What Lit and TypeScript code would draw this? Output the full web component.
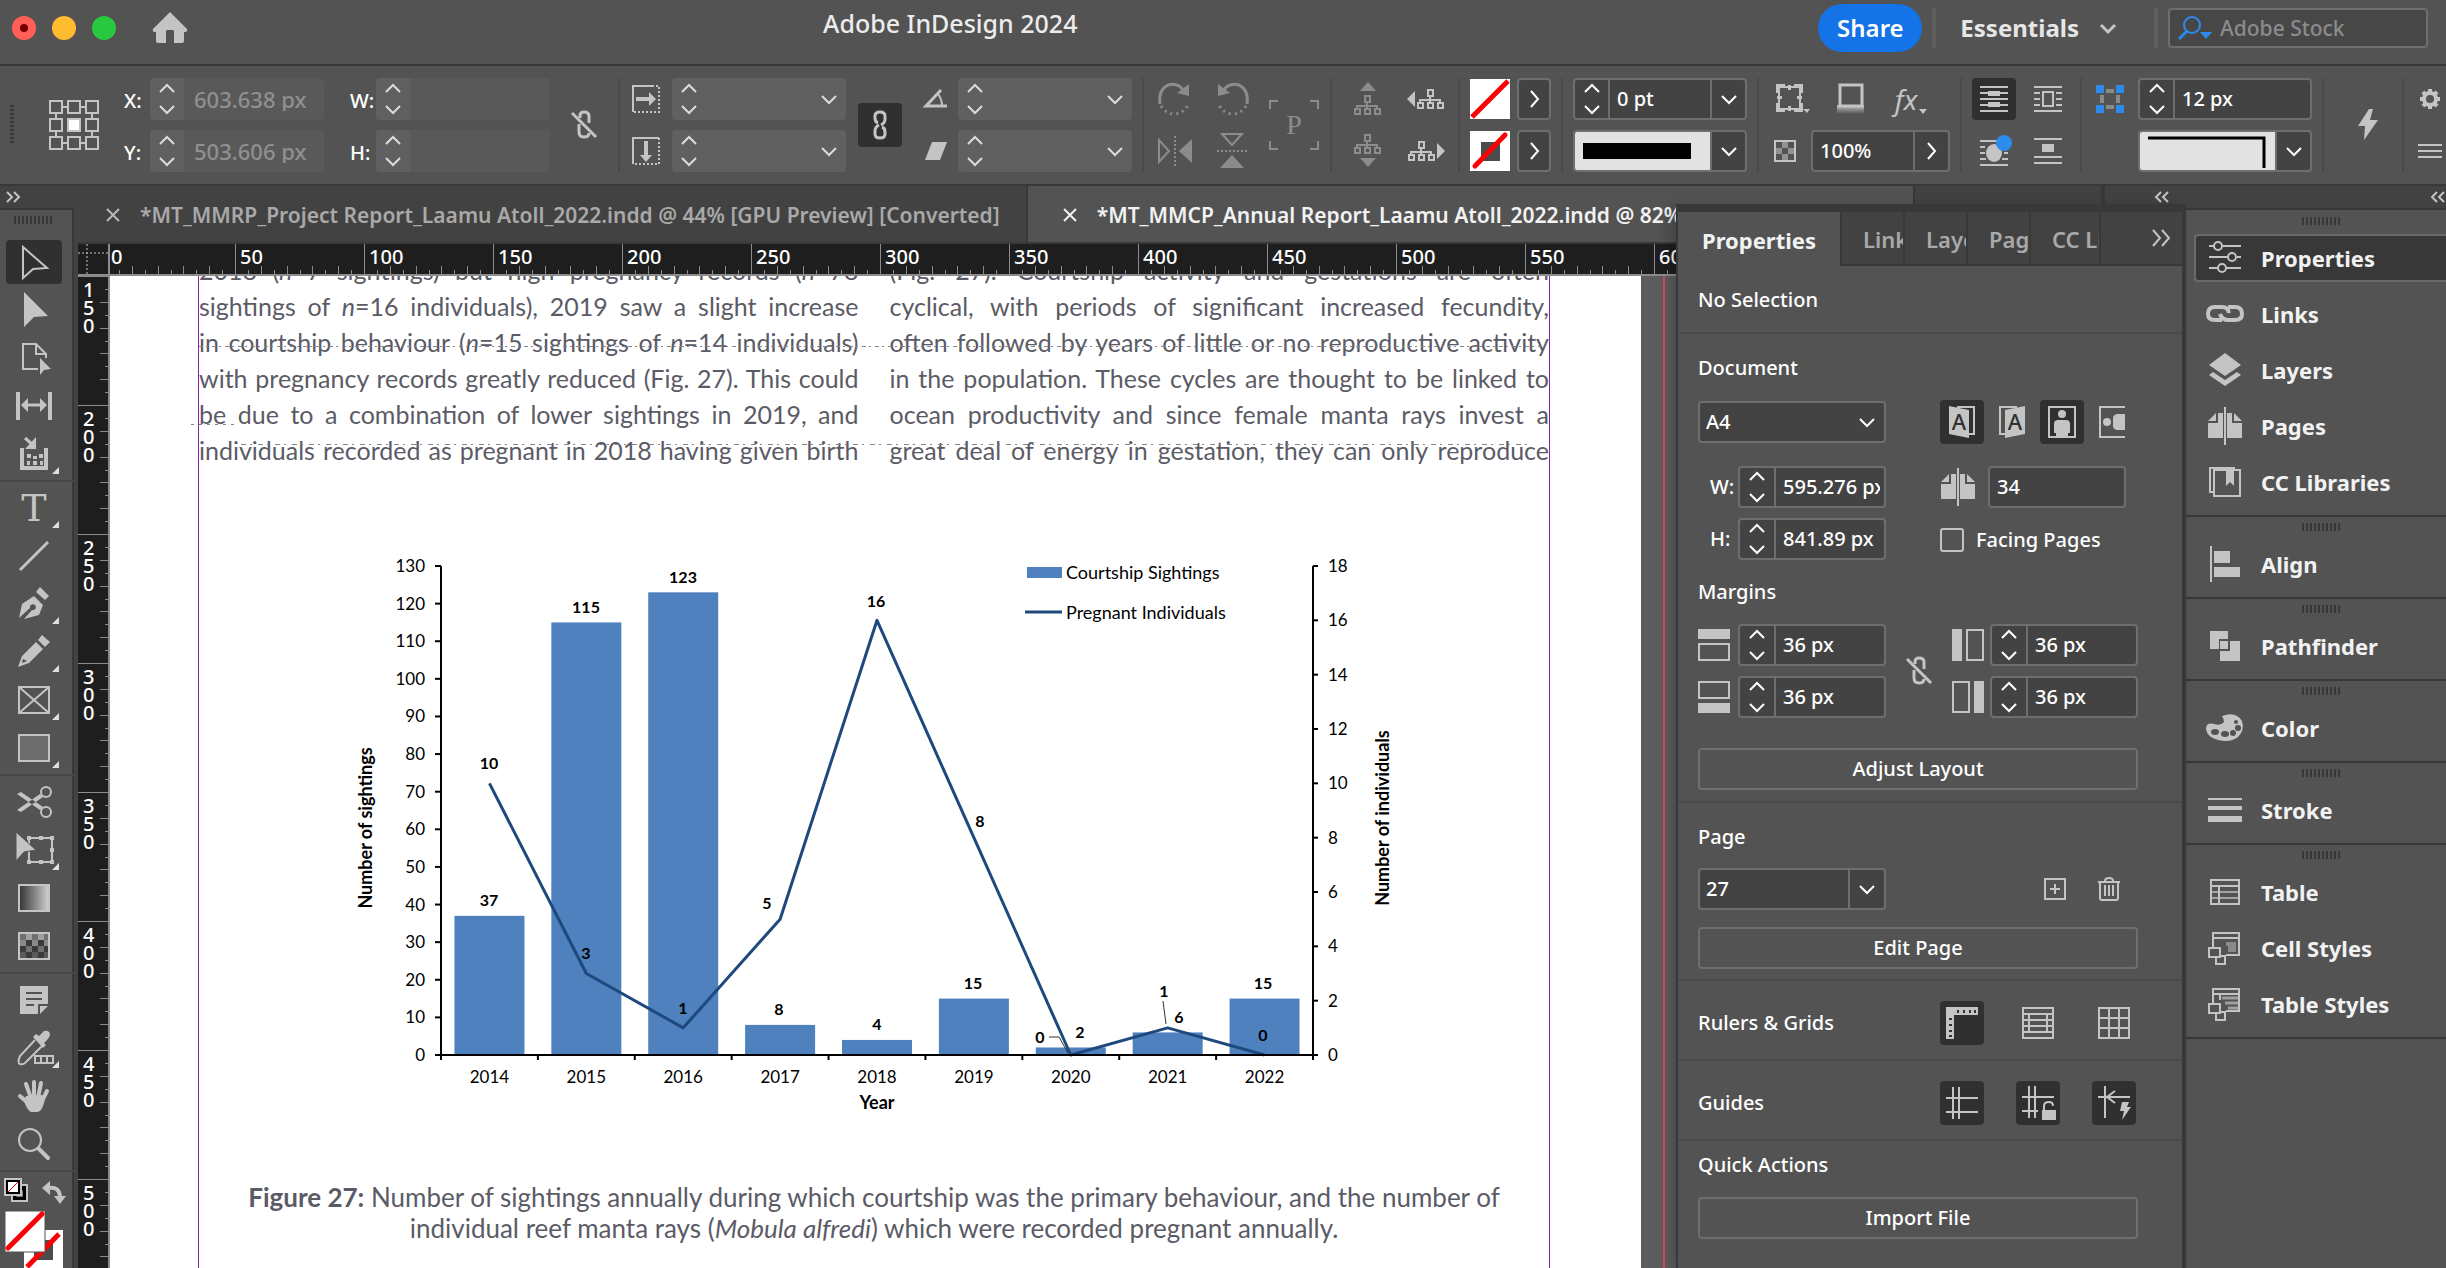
import { LitElement, html, svg, css, nothing } from "lit";
import { customElement } from "lit/decorators.js";
import { classMap } from "lit/directives/class-map.js";

/* ---------- icon helpers ---------- */

const ic = (w: number, h: number, body: unknown) =>
  html`<svg class="ic" width=${w} height=${h} viewBox="0 0 ${w} ${h}" aria-hidden="true">${body}</svg>`;

const up = () => ic(16, 9, svg`<path class="s" d="M1 8L8 1L15 8"/>`);
const down = () => ic(16, 9, svg`<path class="s" d="M1 1L8 8L15 1"/>`);
const right = () => ic(9, 18, svg`<path class="s" d="M1 1L8 9L1 17"/>`);
const dblRight = () => ic(18, 18, svg`<path class="s" d="M1 1L8 9L1 17M10 1L17 9L10 17"/>`);
const dblRightSmall = () => ic(14, 10, svg`<path class="s" d="M1 0L6 5L1 10M8 0L13 5L8 10"/>`);
const dblLeftSmall = () => ic(14, 10, svg`<path class="s" d="M6 0L1 5L6 10M13 0L8 5L13 10"/>`);

const home = () => ic(36, 32, svg`<path class="f" d="M18 0L35 17Q36 20 33 20H32V29Q32 31 30 31H22V19Q22 18 20 18H16Q14 18 14 19V31H6Q4 31 4 29V20H3Q0 20 1 17Z"/>`);

const unlink = () => ic(26, 30, svg`
  <path class="s3" d="M9 8V6Q9 2 13 2Q18 2 18 6V13M8 14V22Q8 27 13 27Q18 27 18 23"/>
  <path class="s3" d="M1 3L25 27"/>`);
const link = () => ic(14, 30, svg`
  <path class="s3" d="M5 13Q2 12 2 8V6Q2 2 7 2Q12 2 12 6V9Q12 13 8 15"/>
  <path class="s3" d="M9 17Q12 18 12 22V24Q12 28 7 28Q2 28 2 24V21Q2 17 6 15"/>`);

const refPoint = () => ic(50, 50, svg`
  ${[0, 18, 36].map((y) => [0, 18, 36].map((x) => svg`<rect class="s" x=${x + 1} y=${y + 1} width="12" height="12"/>`))}
  <path class="s" d="M14 7H18M32 7H36M14 43H18M32 43H36M7 14V18M7 32V36M43 14V18M43 32V36"/>
  <rect fill="#535353" x="16" y="16" width="18" height="18"/>
  <rect fill="#fff" stroke="#c4c4c4" stroke-width="2" x="19" y="19" width="12" height="12"/>`);

const scaleX = () => ic(28, 28, svg`
  <path class="s" d="M20 1H1V27"/><path class="s" stroke-dasharray="2 2" d="M20 1H27V27H1"/>
  <path class="f" d="M4 12H17V7L24 14L17 21V16H4Z"/>`);
const scaleY = () => ic(28, 28, svg`
  <path class="s" d="M1 27V1H27"/><path class="s" stroke-dasharray="2 2" d="M27 1V27H1"/>
  <path class="f" d="M12 4H16V18H20L14 25L8 18H12Z"/>`);
const angle = () => ic(24, 18, svg`<path class="s3" d="M17 0L2 16H23"/><path class="s" d="M14 4Q18 9 18 16"/>`);
const shear = () => ic(24, 18, svg`<path class="f" d="M8 0H23L16 18H1Z"/>`);

const rotateCw = () => ic(34, 34, svg`
  <path class="s3" d="M2 22Q0 8 10 3Q20 0 26 9"/><path class="f" d="M31 2V14L19 11Z"/>
  <path class="s3" stroke-dasharray="2 4" d="M3 24Q8 32 17 32Q26 31 30 23"/>`);
const rotateCcw = () => ic(34, 34, svg`
  <path class="s3" d="M32 22Q34 8 24 3Q14 0 8 9"/><path class="f" d="M3 2V14L15 11Z"/>
  <path class="s3" stroke-dasharray="2 4" d="M31 24Q26 32 17 32Q8 31 4 23"/>`);
const flipH = () => ic(34, 34, svg`
  <path class="s" d="M1 6V28L11 17Z"/><path class="s" stroke-dasharray="2 2" d="M17 2V34"/><path class="f" d="M34 5V29L21 17Z"/>`);
const flipV = () => ic(34, 36, svg`
  <path class="s" d="M7 1H27L17 12Z"/><path class="s" stroke-dasharray="2 2" d="M2 18H32"/><path class="f" d="M5 35H29L17 22Z"/>`);
const corners = () => html`<span class="pmark">${ic(50, 50, svg`<path class="s" d="M1 9V1H9M41 1H49V9M49 41V49H41M9 49H1V41"/>`)}<span>P</span></span>`;

const treeBody = (x: number, y: number) => svg`<g transform="translate(${x} ${y})">
  <rect class="s" x="11" y="1" width="5" height="6"/><path class="s" d="M13 8V14M3 14V11H23V14"/>
  <rect class="s" x="1" y="14" width="5" height="5"/><rect class="s" x="11" y="14" width="5" height="5"/><rect class="s" x="21" y="14" width="5" height="5"/></g>`;
const treeUp = () => ic(28, 34, svg`<path class="f" d="M6 9L14 0L22 9Z"/>${treeBody(0, 13)}`);
const treeDown = () => ic(28, 34, svg`${treeBody(0, 0)}<path class="f" d="M6 24L14 33L22 24Z"/>`);
const treeLeft = () => ic(38, 22, svg`<path class="f" d="M8 3V19L0 11Z"/>${treeBody(10, 1)}`);
const treeRight = () => ic(38, 22, svg`${treeBody(1, 1)}<path class="f" d="M30 3V19L38 11Z"/>`);

const noneFill = () => ic(40, 42, svg`<rect fill="#fff" y="1" width="40" height="40"/><path stroke="#fb0007" stroke-width="5" d="M2 39L38 3"/>`);
const noneStroke = () => ic(40, 42, svg`<rect fill="#fff" y="1" width="40" height="40"/><rect fill="#4b4b4b" x="11" y="12" width="19" height="19"/>
  <path stroke="#fb0007" stroke-width="5" stroke-linecap="round" d="M5 36L35 5"/>`);

const cornerOpts = () => ic(34, 30, svg`
  <rect class="s" x="3" y="3" width="21" height="22"/>
  <path class="s4" d="M2 9V2H9M18 2H25V9M2 19V26H9M18 26H25V19"/>
  <path class="f" d="M12 1H15V6H12ZM12 22H15V27H12ZM1 12H6V15H1ZM21 12H26V15H21Z"/>
  <path fill="#535353" d="M4 4H9V9H4ZM18 4H23V9H18ZM4 19H9V24H4ZM18 19H23V24H18Z"/>
  <path class="f" d="M27 25H34L31 29Z"/>`);
const shadowBox = () => ic(28, 34, svg`
  <defs><linearGradient id="sh" x2="0" y2="1"><stop offset="0" stop-color="#c4c4c4"/><stop offset="1" stop-color="#535353"/></linearGradient></defs>
  <rect fill="url(#sh)" x="0" y="23" width="27" height="9"/><rect fill="#535353" class="frame3" x="3" y="3" width="22" height="21"/>`);
const caret = () => ic(8, 5, svg`<path class="f" d="M0 0H8L4 5Z"/>`);
const checker = () => ic(24, 24, svg`<rect class="s" x="2" y="2" width="20" height="20"/>
  <path class="f" opacity=".55" d="M9 3H15V9H9ZM3 9H9V15H3ZM15 9H21V15H15ZM9 15H15V21H9Z"/>`);

const wrapNone = () => ic(28, 28, svg`<path class="s" d="M0 2H28M0 8H8M20 8H28M0 14H28M0 20H8M20 20H28M0 26H28"/>
  <path class="f" d="M8 6H20V11H8ZM8 17H20V22H8Z"/>`);
const wrapBox = () => ic(28, 28, svg`<path class="s" d="M0 2H28M0 8H6M22 8H28M0 14H6M22 14H28M0 20H6M22 20H28M0 26H28"/><rect class="s" x="9" y="7" width="10" height="14"/>`);
const wrapShape = () => ic(32, 32, svg`<path class="s" d="M2 6H20M2 12H7M2 18H7M26 18H30M2 24H8M24 24H30M2 30H30"/>
  <ellipse class="f" cx="16" cy="18" rx="8" ry="9"/><circle fill="#2d8ceb" cx="26" cy="8" r="8"/>`);
const wrapJump = () => ic(28, 28, svg`<path class="s" d="M0 2H28M0 20H28M0 26H28"/><rect class="f" x="8" y="7" width="12" height="8"/>`);
const autoFit = () => ic(28, 28, svg`<path fill="#2d8ceb" d="M0 0H8V8H0ZM20 0H28V8H20ZM0 20H8V28H0ZM20 20H28V28H20Z"/>
  <path fill="#8a8a8a" d="M10 4H18V8H10ZM10 20H18V24H10ZM4 10H8V18H4ZM20 10H24V18H20Z"/>`);
const bolt = () => ic(20, 32, svg`<path class="f" d="M11 0L0 17H7L6 31L20 11H12L15 0Z"/>`);
const gear = () => ic(22, 22, svg`<circle cx="11" cy="11" r="6" fill="none" stroke="#c4c4c4" stroke-width="4"/>
  ${[0, 45, 90, 135, 180, 225, 270, 315].map((a) => svg`<rect class="f" x="9" y="1" width="4" height="4" transform="rotate(${a} 11 11)"/>`)}`);
const menu = () => ic(24, 16, svg`<path class="s" d="M0 2H24M0 8H24M0 14H24"/>`);
const close = () => ic(14, 14, svg`<path class="s" d="M1 1L13 13M13 1L1 13"/>`);
const searchIc = () => ic(34, 26, svg`<circle cx="14" cy="10" r="8" fill="none" stroke="#2d8ceb" stroke-width="2"/>
  <path stroke="#2d8ceb" stroke-width="3" d="M9 16L1 24"/><path fill="#2d8ceb" d="M22 17H34L28 24Z"/>`);

/* ---------- toolbox icons, each on a 44 x 40 field ---------- */

const T = (body: unknown, more = false) =>
  ic(44, 40, svg`${body}${more ? svg`<path fill="#e0e0e0" d="M43 33V40H36Z"/>` : nothing}`);

const toolGroups: [string, unknown][][] = [
  [
    ["Selection", T(svg`<path class="s" stroke-linejoin="miter" d="M7 5V36L17 27L31 26Z"/>`)],
    ["Direct selection", T(svg`<path class="f" d="M8 2V37L18 27L32 26Z"/>`)],
    ["Page", T(svg`<path class="s" d="M22 31H7V6H20L30 16V20M20 6V16H30"/><path class="f" d="M24 20V37L28 32L35 31Z"/>`)],
    ["Gap", T(svg`<path class="s4" d="M2 6V34M34 6V34"/><path class="s3" d="M10 19H26"/><path class="f" d="M5 19L12 12V26ZM31 19L24 12V26Z"/>`)],
    ["Content collector", T(svg`<path class="s4" d="M6 14V34H30V14"/><path class="s3" d="M9 4L17 11"/><path class="f" d="M20 3V15H9Z"/>
      <path class="f" d="M11 20H15V24H11ZM23 20H27V24H23ZM11 27H14V31H11ZM17 27H21V31H17ZM24 27H27V31H24ZM17 22H21V25H17Z"/>`, true)],
  ],
  [
    ["Type", T(svg`<text class="tee" x="18" y="33">T</text>`, true)],
    ["Line", T(svg`<path class="s3" d="M4 34L32 6"/>`)],
    ["Pen", T(svg`<path class="f" d="M18 12L27 21L23 31L8 35L16 26A3 3 0 1 0 14 24L3 34L6 20Z"/><path class="f" d="M24 3L33 12L29 16L20 8Z"/>`, true)],
    ["Pencil", T(svg`<path class="f" d="M20 10L27 17L13 31L2 35L6 24ZM7 27L6 31L11 29Z" fill-rule="evenodd"/><path class="f" d="M26 3L34 10L29 15L22 8Z"/>`, true)],
    ["Rectangle frame", T(svg`<rect class="s" x="3" y="7" width="30" height="26"/><path class="s" d="M3 7L33 33M33 7L3 33"/>`, true)],
    ["Rectangle", T(svg`<rect fill="#6d6d6d" stroke="#c4c4c4" stroke-width="2" x="3" y="7" width="30" height="26"/>`, true)],
  ],
  [
    ["Scissors", T(svg`<circle class="s" cx="30" cy="10" r="5"/><circle class="s" cx="30" cy="30" r="5"/>
      <path class="f" d="M1 12L5 10L27 25L24 28ZM1 28L5 30L27 15L24 12Z"/>`)],
    ["Free transform", T(svg`<rect class="s" x="13" y="8" width="23" height="24"/>
      <path class="f" d="M11 6H15V10H11ZM34 6H38V10H34ZM11 30H15V34H11ZM34 30H38V34H34ZM23 6H27V10H23ZM23 30H27V34H23ZM34 18H38V22H34Z"/>
      <path fill="#c4c4c4" stroke="#535353" d="M0 2V31L8 22L20 20Z"/>`, true)],
    ["Gradient swatch", T(svg`<defs><linearGradient id="gr"><stop offset="0" stop-color="#333"/><stop offset="1" stop-color="#d0d0d0"/></linearGradient></defs>
      <rect fill="url(#gr)" stroke="#c4c4c4" stroke-width="2" x="3" y="7" width="30" height="26"/>`)],
    ["Gradient feather", T(svg`<rect fill="#3a3a3a" x="3" y="7" width="30" height="26"/>
      <path fill="#a0a0a0" d="M10 8H16V14H10ZM22 8H28V14H22Z"/><path fill="#8a8a8a" d="M4 14H10V20H4ZM16 14H22V20H16ZM28 14H32V20H28Z"/>
      <path fill="#707070" d="M10 20H16V26H10ZM22 20H28V26H22ZM4 8H10V14H4ZM16 8H22V14H16ZM28 8H32V14H28Z"/>
      <path fill="#5a5a5a" d="M4 26H10V32H4ZM16 26H22V32H16ZM28 26H32V32H28Z"/><rect class="s" x="3" y="7" width="30" height="26"/>`)],
  ],
  [
    ["Note", T(svg`<path class="f" d="M4 6H32V24H22V34H4ZM24 34V26H32Z"/><path stroke="#535353" stroke-width="2" d="M10 13H26M10 19H26M10 25H18"/>`)],
    ["Eyedropper", T(svg`<path class="s" d="M19 12L4 28Q1 35 4 36Q8 37 11 33L26 18"/>
      <path class="f" d="M17 9L20 6L23 8L28 3Q33 2 34 6Q34 9 31 12L28 15L30 17L27 20Z"/><rect fill="#535353" stroke="#c4c4c4" stroke-width="2" x="19" y="28" width="18" height="7"/>
      <path class="s" d="M25 28V35M31 28V35"/>`, true)],
    ["Hand", T(svg`<path fill="none" stroke="#c4c4c4" stroke-width="4" stroke-linecap="round" d="M4 20L12 27M10 8L15 22M18 6V22M25 7L22 22M31 15L25 27"/>
      <path class="f" d="M10 20L26 19L29 21Q27 36 21 36H15Q11 34 8 25Z"/>`)],
    ["Zoom", T(svg`<circle class="s" cx="14" cy="16" r="11"/><path stroke="#c4c4c4" stroke-width="4" stroke-linecap="round" d="M23 25L32 34"/>`)],
  ],
];

/* ---------- dock icons ---------- */

const pagesIc = () => ic(36, 38, svg`<path class="f" d="M1 14L9 6V14ZM11 6H16V31H1V16H11ZM35 14L27 6V14ZM25 6H20V31H35V16H25Z"/><path class="s" d="M18 0V38"/>`);
const dockGroups: [string, unknown][][] = [
  [
    ["Properties", ic(38, 32, svg`<path class="s" d="M3 4H8M17 4H35M3 15H22M31 15H35M3 26H11M20 26H35"/><circle class="s" cx="12" cy="4" r="4" /><circle class="s" cx="26" cy="15" r="4"/><circle class="s" cx="16" cy="26" r="4"/>`)],
    ["Links", ic(38, 20, svg`<path class="s4" d="M16 16H9Q2 16 2 10Q2 3 9 3H16Q22 3 23 9"/><path class="s4" d="M22 3H29Q36 3 36 10Q36 16 29 16H22Q16 16 14 10"/>`)],
    ["Layers", ic(38, 34, svg`<path class="f" d="M19 0L35 12L19 23L3 12Z"/><path class="f" d="M3 22L7 19L19 27L31 19L35 22L19 33Z"/>`)],
    ["Pages", ic(38, 38, svg`<path class="f" d="M2 14L10 6V14ZM12 6H17V31H2V16H12ZM36 14L28 6V14ZM26 6H21V31H36V16H26Z"/><path class="s" d="M19 0V38"/>`)],
    ["CC Libraries", ic(38, 32, svg`<path class="s" d="M8 26H4V2H29"/><rect class="s" x="8" y="4" width="26" height="26"/><path class="f" d="M20 4H28V20L24 16L20 20Z"/>`)],
  ],
  [["Align", ic(38, 36, svg`<path class="s" d="M5 0V36"/><path class="f" d="M8 5H24V17H8ZM8 21H34V31H8Z"/>`)]],
  [["Pathfinder", ic(38, 32, svg`<path class="f" d="M4 1H22V9H13V19H4ZM24 11H34V31H14V21H24ZM14 11H22V19H14Z"/>`)]],
  [["Color", ic(38, 30, svg`<path fill="#c4c4c4" d="M16 3Q30 -2 36 8Q39 17 32 24Q24 30 12 27Q1 24 0 16Q0 9 8 11Q15 13 18 9Q18 6 16 3Z"/>
    <g fill="#535353"><ellipse cx="9" cy="19" rx="4" ry="3"/><ellipse cx="19" cy="21" rx="4" ry="3"/><ellipse cx="27" cy="20" rx="3" ry="3"/><circle cx="32" cy="15" r="3"/><circle cx="30" cy="9" r="2"/></g>`)]],
  [["Stroke", ic(38, 26, svg`<path class="f" d="M2 1H36V3H2ZM2 9H36V13H2ZM2 19H36V25H2Z"/>`)]],
  [
    ["Table", ic(38, 28, svg`<rect class="s" x="5" y="2" width="28" height="24"/><path class="s" d="M5 8H33M13 8V26"/><path class="s" opacity=".7" d="M5 14H33M5 20H33"/>`)],
    ["Cell Styles", ic(38, 36, svg`<path class="s" d="M7 18V3H33V25H20M7 8H33"/><path fill="#8a8a8a" d="M20 12H30V22H22V16H20Z"/>
      <rect class="s" x="10" y="26" width="9" height="8"/><rect fill="#535353" stroke="#c4c4c4" stroke-width="2" x="3" y="18" width="11" height="9"/>`)],
    ["Table Styles", ic(38, 36, svg`<path class="s" d="M7 18V3H33V25H20M7 8H33M14 8V14"/><path stroke="#a0a0a0" stroke-width="3" d="M16 12H32M19 17H32M22 22H32"/>
      <rect class="s" x="10" y="26" width="9" height="8"/><rect fill="#535353" stroke="#c4c4c4" stroke-width="2" x="3" y="18" width="11" height="9"/>`)],
  ],
];

/* ---------- report figure ---------- */

const years = ["2014", "2015", "2016", "2017", "2018", "2019", "2020", "2021", "2022"];
const sightings = [37, 115, 123, 8, 4, 15, 2, 6, 15];
const pregnant = [10, 3, 1, 5, 16, 8, 0, 1, 0];
/* where each value label sits: [text, x, y of its middle] */
const barLabels: [string, number, number][] = [
  ["37", 290, 360], ["115", 387, 67], ["123", 484, 37], ["8", 580, 469], ["4", 678, 484],
  ["15", 774, 443], ["2", 881, 492], ["6", 980, 477], ["15", 1064, 443],
];
const lineLabels: [string, number, number][] = [
  ["10", 290, 223], ["3", 387, 413], ["1", 484, 468], ["5", 568, 363], ["16", 677, 61],
  ["8", 781, 281], ["0", 841, 497], ["1", 965, 451], ["0", 1064, 495],
];
const X0 = 242, X1 = 1114, Y0 = 515, Y1 = 26;
const step = (X1 - X0) / 9;
const cx = (i: number) => X0 + step * (i + 0.5);
const yL = (v: number) => Y0 - ((Y0 - Y1) * v) / 130;
const yR = (v: number) => Y0 - ((Y0 - Y1) * v) / 18;

const leftCol = [
  html`2018 (<i>n</i>=7 sightings) but high pregnancy records (<i>n</i>=78`,
  html`sightings of <i>n</i>=16 individuals), 2019 saw a slight increase`,
  html`in courtship behaviour (<i>n</i>=15 sightings of <i>n</i>=14 individuals)`,
  html`with pregnancy records greatly reduced (Fig. 27). This could`,
  html`be due to a combination of lower sightings in 2019, and`,
  html`individuals recorded as pregnant in 2018 having given birth`,
];
const rightCol = [
  "(Fig. 27). Courtship activity and gestations are often",
  "cyclical, with periods of significant increased fecundity,",
  "often followed by years of little or no reproductive activity",
  "in the population. These cycles are thought to be linked to",
  "ocean productivity and since female manta rays invest a",
  "great deal of energy in gestation, they can only reproduce",
];

const UNIT = 129 / 50;

@customElement("app-root")
export class AppRoot extends LitElement {
  static styles = css`
    :host { display: block; height: 100vh; overflow: hidden; background: #535353; color: #fff;
      font: 500 20px/24px "Noto Sans", "Open Sans", sans-serif; }
    * { box-sizing: border-box; }
    button, input, select { font: inherit; color: inherit; background: none; border: 0; margin: 0; padding: 0; border-radius: 0; min-width: 0; }
    button { display: flex; align-items: center; justify-content: center; }
    select { appearance: none; }
    h2, p { margin: 0; font: inherit; }
    .ic { display: block; flex: none; overflow: visible; color: #c4c4c4; }
    .s, .s3, .s4 { fill: none; stroke: currentColor; stroke-width: 2; }
    .s3 { stroke-width: 3; }
    .s4 { stroke-width: 4; }
    .frame3 { stroke: currentColor; stroke-width: 3; }
    .f { fill: currentColor; }
    .tee { font: 38px "DejaVu Serif", serif; fill: #c4c4c4; text-anchor: middle; }
    .bind { font: 500 22px "Noto Sans", sans-serif; text-anchor: middle; fill: #303030; }
    .app { display: flex; flex-direction: column; height: 100%; }

    /* title bar */
    .title-bar { display: flex; align-items: center; height: 66px; padding: 0 18px 8px 12px; border-bottom: 2px solid #383838; flex: none; }
    .lights { display: flex; gap: 16px; margin-right: 36px; }
    .light { width: 24px; height: 24px; border-radius: 50%; }
    .red { background: #ff5f57; }
    .dot { width: 8px; height: 8px; border-radius: 50%; background: #7a0000; }
    .amber { background: #febc2e; }
    .green { background: #28c840; }
    .gap-a { flex: 6; }
    .gap-b { flex: 7; }
    .app-name { font-size: 25px; line-height: 46px; align-self: flex-start; color: #ececec; }
    .share { height: 48px; width: 104px; border-radius: 24px; background: #1473e6; font-size: 24px; font-weight: 600; }
    .vbar { width: 4px; height: 40px; background: #5f5f5f; margin: 0 10px; }
    .essentials { font-size: 24px; font-weight: 700; color: #e6e6e6; gap: 21px; padding: 0 28px 0 14px; }
    .stock { display: flex; align-items: center; gap: 8px; width: 260px; height: 40px; padding-left: 8px; border: 2px solid #6e6e6e; border-radius: 4px; background: #474747; }
    .stock input { flex: 1; font-size: 21px; }
    .stock input::placeholder { color: #8c8c8c; opacity: 1; }

    /* control bar */
    .control { display: flex; height: 120px; padding: 12px 0; border-bottom: 2px solid #383838; flex: none; }
    .grp { display: flex; border-left: 2px solid #4a4a4a; }
    .grp.first { border: 0; }
    .grp.pad { padding-right: 10px; }
    .grp.pad-l { padding-left: 10px; }
    .grp.last { flex: 1; justify-content: flex-end; padding-right: 4px; }
    .rows { display: flex; flex-direction: column; gap: 10px; }
    .row { display: flex; }
    .c { display: flex; align-items: center; justify-content: center; height: 42px; }
    .mid { display: flex; align-items: center; justify-content: center; height: 94px; }
    .dim .ic { color: #8c8c8c; }
    .w24 { width: 24px; } .w44 { width: 44px; } .w48 { width: 48px; } .w52 { width: 52px; } .w56 { width: 56px; }
    .w62 { width: 62px; } .w68 { width: 68px; } .w72 { width: 72px; } .w100 { width: 100px; }
    .vgrip { width: 4px; height: 40px; background: repeating-linear-gradient(#383838 0 2px, transparent 2px 4px); }
    .lbl { width: 26px; height: 42px; line-height: 46px; }
    .lead { margin-left: 26px; }
    .pmark { display: grid; place-items: center; font: 28px/50px "Liberation Serif", serif; color: #8c8c8c; }
    .pmark > * { grid-area: 1 / 1; }
    .pmark .ic { color: #8c8c8c; }
    .on { background: #303030; border-radius: 4px; }
    .sq { width: 44px; height: 44px; flex: none; }
    .fx { font: italic 28px/30px "Noto Sans", sans-serif; font-weight: 400; color: #c4c4c4; align-items: flex-end; display: flex; gap: 2px; }

    /* fields */
    .field { display: flex; width: 174px; height: 42px; border: 2px solid #6e6e6e; border-radius: 4px; background: #434343; overflow: hidden; flex: none; }
    .field .ic, .box .ic { color: #fff; }
    .field > * + * { border-left: 2px solid #6e6e6e; }
    .field input { flex: 1; width: 0; padding: 0 4px 0 7px; }
    .field .chev { width: 35px; }
    .spin { display: flex; flex-direction: column; justify-content: center; gap: 12px; width: 33px; flex: none; }
    .flat { border: 0; background: #606060; }
    .flat > * + * { border: 0; }
    .flat .spin { width: 34px; }
    .flat .ic { color: #dcdcdc; }
    .off { background: #595959; }
    .off .spin { background: #606060; }
    .off input { color: #909090; padding-left: 10px; font-size: 22px; }
    .pct { width: 139px; }
    .preview { flex: 1; background: #e2e2e2; display: flex; align-items: center; justify-content: center; }
    .rule { flex: 1; height: 16px; margin: 0 19px 0 8px; background: #000; }
    .box { display: flex; align-items: center; justify-content: center; width: 34px; height: 42px; border: 2px solid #6e6e6e; border-radius: 4px; background: #434343; }
    .gap7 { gap: 7px; }
    .gap10 { gap: 10px; }

    /* workspace */
    .work { display: flex; flex: 1; min-height: 0; position: relative; }
    .strip { height: 24px; background: #424242; border-bottom: 2px solid #383838; display: flex; align-items: center; flex: none; }
    .tools { width: 78px; flex: none; border-right: 4px solid #424242; display: flex; flex-direction: column; box-shadow: inset -2px 0 #383838; }
    .tools .strip { padding-left: 6px; }
    .hgrip { width: 38px; height: 8px; background: repeating-linear-gradient(90deg, #383838 0 2px, transparent 2px 4px); }
    .tools .hgrip { margin: 6px 0 14px 14px; flex: none; }
    .tg { display: flex; flex-direction: column; padding-bottom: 2px; margin-bottom: 2px; border-bottom: 2px solid #484848; flex: none; }
    .tool { height: 44px; width: 56px; margin: 2px 0 2px 6px; padding-left: 8px; }
    .chips { display: flex; gap: 14px; padding: 4px 0 0 4px; flex: none; }
    .paint { display: block; margin: 7px 0 0 5px; }

    .doc { flex: 1; min-width: 0; display: flex; flex-direction: column; }
    .tabs { display: flex; height: 58px; background: #424242; border-bottom: 2px solid #383838; flex: none; overflow: hidden; }
    .tab { padding: 2px 26px 0 28px; gap: 20px; font-size: 21px; font-weight: 600; color: #a9a9a9; white-space: nowrap; border-right: 2px solid #383838; flex: none; }
    .tab .ic { color: #b8b8b8; }
    .tab.cur { background: #535353; color: #f2f2f2; width: 887px; justify-content: flex-start; padding-left: 35px; }
    .tab.cur .ic { color: #f2f2f2; }
    .hr { display: flex; height: 32px; background: #1e1e1e; border-bottom: 2px solid #8c8c8c; flex: none; }
    .rulers { font-size: 20px; fill: #fff; display: block; }
    .tick { stroke: #8c8c8c; stroke-width: 1; }
    .corner { flex: none; border-right: 2px solid #8c8c8c; }
    .stretch { flex: 1; height: 30px; display: block; }
    .canvas { display: flex; flex: 1; min-height: 0; background: #5d5d5d; }
    .vr { width: 32px; background: #1e1e1e; border-right: 2px solid #8c8c8c; flex: none; }
    .page { flex: 1; min-width: 0; background: #fff; padding: 0 91px 0 88px; overflow: hidden; }
    .bleed { width: 460px; flex: none; background: linear-gradient(90deg, transparent 22px, #d8485c 22px 24px, transparent 24px); }
    .frame { position: relative; display: flow-root; border: solid #8a1fa8; border-width: 0 1px; height: 100%; color: #5b5b66; font-family: Lato, Carlito, sans-serif; font-weight: 400; }
    .cols { display: grid; grid-template-columns: minmax(0, 1fr) minmax(0, 1fr); gap: 31px; margin-top: -25px; padding-top: 1px; font-size: 25px; line-height: 36px; }
    .ln { text-align: justify; text-align-last: justify; white-space: nowrap; }
    .edges { position: absolute; left: -8px; top: 0; width: 100%; height: 180px; stroke: #85858f; stroke-width: 1; }
    .chart { display: block; width: 100%; height: 590px; margin: 72px 0 52px; font: 17px Lato, Carlito, sans-serif; fill: #000; }
    .axis { stroke: #000; stroke-width: 2; fill: none; }
    .bar { fill: #4e81bd; }
    .trend { fill: none; stroke: #1f497d; stroke-width: 3; stroke-linejoin: round; }
    .b { font-weight: 700; }
    .val { font-size: 16px; }
    .big { font-size: 18px; }
    .end { text-anchor: end; }
    .m { text-anchor: middle; }
    .caption { text-align: center; font-size: 26px; line-height: 31px; }

    /* dock */
    .side { width: 345px; flex: none; display: flex; flex-direction: column; align-items: flex-end; }
    .side .strip { width: 100%; justify-content: space-between; padding: 0 1px 0 50px; border-left: 4px solid #383838; }
    .dock { width: 264px; border-left: 4px solid #383838; flex: 1; }
    .dg { padding: 7px 0 5px; border-bottom: 2px solid #383838; display: flex; flex-direction: column; }
    .dg + .dg { padding-top: 6px; }
    .dg .hgrip { margin: 0 0 5px 116px; }
    .item { height: 56px; justify-content: flex-start; gap: 17px; padding-left: 20px; font-size: 22px; font-weight: 700; color: #f2f2f2; }
    .item.cur { height: 48px; margin: 4px 0 4px 8px; padding-left: 10px; background: #383838; border: 2px solid #6a6a6a; border-right: 0; border-radius: 4px 0 0 4px; }

    /* floating panel */
    .panel { position: absolute; right: 260px; top: 18px; bottom: 0; width: 510px; background: #535353; border: solid #383838; border-width: 8px 4px 0 2px; box-shadow: -6px 4px 14px rgba(0, 0, 0, .2); display: flex; flex-direction: column; }
    .ptabs { display: flex; height: 54px; flex: none; }
    .ptab { width: 63px; padding: 2px 0 0 21px; justify-content: flex-start; overflow: hidden; white-space: nowrap; font-size: 22px; font-weight: 600; color: #a9a9a9; background: #424242; border: solid #383838; border-width: 0 0 2px 2px; flex: none; }
    .ptab.cur { width: 162px; padding-left: 24px; color: #f2f2f2; background: none; border: 0; font-weight: 700; }
    .ptab.wide { width: 70px; }
    .ptab.more { flex: 1; padding: 0 12px 0 0; justify-content: flex-end; }
    .sec { padding: 0 44px 0 20px; border-bottom: 2px solid #4a4a4a; flex: none; }
    .sec.nosel { height: 68px; padding-top: 22px; }
    .sec.document { height: 469px; padding-top: 22px; }
    .sec.pg { height: 178px; padding-top: 22px; }
    .sec.grid { height: 80px; padding-top: 6px; }
    .sec.quick { border: 0; padding-top: 12px; }
    .pair { display: grid; grid-template-columns: 188px 1fr; column-gap: 54px; align-items: center; }
    .mt20 { margin-top: 20px; } .mt18 { margin-top: 18px; } .mt10 { margin-top: 10px; } .mt22 { margin-top: 22px; } .mt30 { margin-top: 30px; } .mt16 { margin-top: 16px; }
    .sel { display: grid; width: 188px; height: 42px; border: 2px solid #6e6e6e; border-radius: 4px; background: #434343; align-items: center; }
    .sel > * { grid-area: 1 / 1; }
    .sel select { width: 100%; height: 100%; padding-left: 6px; }
    .arrow { justify-self: end; padding: 0 9px; height: 100%; display: flex; align-items: center; pointer-events: none; }
    .arrow .ic { color: #fff; }
    .split { border-left: 2px solid #6e6e6e; }
    .ibtns { display: flex; gap: 6px; }
    .lf { display: flex; align-items: center; justify-content: space-between; }
    .lf label { padding-left: 12px; }
    .lf .field { width: 148px; }
    .panel .field .spin { width: 34px; }
    .grow { flex: 1; display: flex; align-items: center; gap: 12px; }
    .pgs { width: 138px; }
    .chk { appearance: none; width: 24px; height: 24px; border: 2px solid #c4c4c4; border-radius: 3px; }
    .facing { gap: 12px; display: flex; align-items: center; padding-top: 2px; }
    .margins { display: grid; grid-template-columns: 188px 1fr 186px; align-items: center; }
    .stack { display: grid; gap: 10px; }
    .wide-btn { width: 100%; height: 42px; border: 2px solid #6e6e6e; border-radius: 4px; }
    .spread { display: flex; align-items: center; justify-content: space-between; height: 72px; }
    .three { display: flex; gap: 32px; margin-right: 2px; }
    .pageic { display: flex; gap: 10px; justify-content: flex-end; padding-right: 7px; }
  `;

  private spin(label: string) {
    return html`<span class="spin"><button aria-label="Increase ${label}">${up()}</button><button aria-label="Decrease ${label}">${down()}</button></span>`;
  }

  private field(label: string, value = "", o: { cls?: string; id?: string; chev?: boolean } = {}) {
    return html`<div class="field ${o.cls ?? ""}">
      ${this.spin(label)}<input id=${o.id ?? nothing} aria-label=${o.id ? nothing : label} .value=${value} />
      ${o.chev ? html`<button class="chev" aria-label="${label} presets">${down()}</button>` : nothing}
    </div>`;
  }

  private iconBtn(label: string, icon: unknown, on = false) {
    return html`<button class=${classMap({ sq: true, on })} aria-label=${label} aria-pressed=${on}>${icon}</button>`;
  }

  private titleBar() {
    return html`<header class="title-bar">
      <div class="lights">
        <button class="light red" aria-label="Close"><span class="dot"></span></button>
        <button class="light amber" aria-label="Minimise"></button>
        <button class="light green" aria-label="Zoom"></button>
      </div>
      <button aria-label="Home">${home()}</button>
      <span class="gap-a"></span><span class="app-name">Adobe InDesign 2024</span><span class="gap-b"></span>
      <button class="share">Share</button><span class="vbar"></span>
      <button class="essentials">Essentials ${ic(16, 9, svg`<path class="s3" d="M1 1L8 8L15 1"/>`)}</button><span class="vbar"></span>
      <label class="stock">${searchIc()}<input type="search" placeholder="Adobe Stock" aria-label="Search Adobe Stock" /></label>
    </header>`;
  }

  private controlBar() {
    return html`<section class="control" aria-label="Control">
      <div class="grp first">
        <div class="mid w24"><span class="vgrip"></span></div>
        <div class="mid w100">${refPoint()}</div>
        <div class="rows"><label class="lbl" for="x">X:</label><label class="lbl" for="y">Y:</label></div>
        <div class="rows">${this.field("X", "603.638 px", { cls: "flat off", id: "x" })}${this.field("Y", "503.606 px", { cls: "flat off", id: "y" })}</div>
        <div class="rows lead"><label class="lbl" for="w">W:</label><label class="lbl" for="h">H:</label></div>
        <div class="rows">${this.field("W", "", { cls: "flat off", id: "w" })}${this.field("H", "", { cls: "flat off", id: "h" })}</div>
        <div class="mid w68">${unlink()}</div>
      </div>
      <div class="grp pad">
        <div class="rows w52"><div class="c">${scaleX()}</div><div class="c">${scaleY()}</div></div>
        <div class="rows">${this.field("Scale X", "", { cls: "flat", chev: true })}${this.field("Scale Y", "", { cls: "flat", chev: true })}</div>
        <div class="mid w68">${this.iconBtn("Constrain proportions", link(), true)}</div>
        <div class="rows w44"><div class="c">${angle()}</div><div class="c">${shear()}</div></div>
        <div class="rows">${this.field("Rotation", "", { cls: "flat", chev: true })}${this.field("Shear", "", { cls: "flat", chev: true })}</div>
      </div>
      <div class="grp dim">
        <div class="rows w62"><button class="c" aria-label="Rotate clockwise">${rotateCw()}</button><button class="c" aria-label="Flip horizontal">${flipH()}</button></div>
        <div class="rows w52"><button class="c" aria-label="Rotate anticlockwise">${rotateCcw()}</button><button class="c" aria-label="Flip vertical">${flipV()}</button></div>
        <div class="mid w72">${corners()}</div>
      </div>
      <div class="grp pad">
        <div class="rows w72 dim"><button class="c" aria-label="Select container">${treeUp()}</button><button class="c" aria-label="Select content">${treeDown()}</button></div>
        <div class="rows w44"><button class="c" aria-label="Select previous">${treeLeft()}</button><button class="c" aria-label="Select next">${treeRight()}</button></div>
      </div>
      <div class="grp pad pad-l">
        <div class="rows">
          <div class="row gap7">${noneFill()}<button class="box" aria-label="Fill options">${right()}</button></div>
          <div class="row gap7">${noneStroke()}<button class="box" aria-label="Stroke options">${right()}</button></div>
        </div>
      </div>
      <div class="grp pad pad-l">
        <div class="rows">
          ${this.field("Stroke weight", "0 pt", { chev: true })}
          <div class="field"><span class="preview"><span class="rule"></span></span><button class="chev" aria-label="Stroke type">${down()}</button></div>
        </div>
      </div>
      <div class="grp pad">
        <div class="rows">
          <div class="row"><button class="c w68" aria-label="Corner options">${cornerOpts()}</button><button class="c w48" aria-label="Drop shadow">${shadowBox()}</button>
            <button class="c w72" aria-label="Effects"><span class="fx">fx${caret()}</span></button></div>
          <div class="row"><span class="c w52">${checker()}</span>
            <div class="field pct"><input aria-label="Opacity" .value=${"100%"} /><button class="chev" aria-label="Opacity slider">${right()}</button></div></div>
        </div>
      </div>
      <div class="grp pad pad-l">
        <div class="rows"><div class="row gap10">
          <div class="rows"><button class="c w44 on" aria-label="No text wrap">${wrapNone()}</button><button class="c w44" aria-label="Wrap around shape">${wrapShape()}</button></div>
          <div class="rows"><button class="c w44" aria-label="Wrap around box">${wrapBox()}</button><button class="c w44" aria-label="Jump object">${wrapJump()}</button></div>
        </div></div>
      </div>
      <div class="grp pad">
        <div class="rows w56"><button class="c" aria-label="Corner radius link">${autoFit()}</button></div>
        <div class="rows">
          ${this.field("Corner size", "12 px")}
          <div class="field"><span class="preview">${ic(120, 34, svg`<path fill="none" stroke="#000" stroke-width="3" d="M0 4H116V34"/>`)}</span><button class="chev" aria-label="Corner shape">${down()}</button></div>
        </div>
      </div>
      <div class="grp pad-l"><button class="mid w68" aria-label="Quick apply">${bolt()}</button></div>
      <div class="grp last"><div class="rows"><button class="c" aria-label="Settings">${gear()}</button><button class="c" aria-label="Menu">${menu()}</button></div></div>
    </section>`;
  }

  private toolbox() {
    return html`<nav class="tools" aria-label="Tools">
      <div class="strip">${dblRightSmall()}</div>
      <span class="hgrip"></span>
      ${toolGroups.map((g, gi) => html`<div class="tg">${g.map(([name, icon], i) =>
        html`<button class=${classMap({ tool: true, on: gi === 0 && i === 0 })} aria-label=${name}>${icon}</button>`)}</div>`)}
      <div class="chips">
        ${ic(24, 24, svg`<rect fill="#000" stroke="#c4c4c4" stroke-width="2" x="8" y="7" width="15" height="16"/><rect fill="#535353" stroke="#fff" x="13" y="13" width="5" height="5"/>
          <rect fill="#fff" stroke="#c4c4c4" stroke-width="2" x="1" y="1" width="16" height="16"/><rect fill="#fff" stroke="#000" stroke-width="2" x="3" y="3" width="12" height="12"/><path stroke="#fb0007" d="M4 14L14 4"/>`)}
        ${ic(24, 26, svg`<path class="s4" d="M6 10Q18 8 18 20"/><path class="f" d="M0 10L8 3V17ZM12 18H24L18 26Z"/>`)}
      </div>
      <svg class="paint ic" width="60" height="60" viewBox="0 0 60 60" aria-hidden="true">
        <rect fill="#fff" x="19" y="19" width="39" height="40"/><rect fill="#4b4b4b" x="29" y="29" width="19" height="20"/>
        <path stroke="#fb0007" stroke-width="5" d="M22 56L54 23"/>
        <rect fill="#fff" stroke="#535353" x="0" y="0" width="40" height="41"/><path stroke="#fb0007" stroke-width="5" stroke-linecap="round" d="M3 37L37 3"/>
      </svg>
    </nav>`;
  }

  private hRuler() {
    const marks = Array.from({ length: 156 }, (_, i) => i * 5);
    return html`<svg class="rulers stretch" aria-hidden="true">
      ${marks.map((n) => {
        const x = Math.round(n * UNIT - 4);
        const top = n % 50 === 0 ? 0 : n % 10 === 0 ? 22 : 26;
        return svg`<line class="tick" x1=${x + 0.5} x2=${x + 0.5} y1=${top} y2="30"/>
          ${n % 50 === 0 ? svg`<text x=${n === 0 ? 1 : x + 5} y="20">${n}</text>` : nothing}`;
      })}</svg>`;
  }

  private vRuler() {
    const marks = Array.from({ length: 80 }, (_, i) => 150 + i * 5);
    return html`<svg class="rulers vr" height="100%" aria-hidden="true">
      ${marks.map((n) => {
        const y = Math.round((n - 150) * UNIT);
        const left = n % 50 === 0 ? 0 : n % 10 === 0 ? 22 : 27;
        return svg`<line class="tick" x1=${left} x2="30" y1=${y + 0.5} y2=${y + 0.5}/>
          ${n % 50 === 0 ? String(n).split("").map((d, i) => svg`<text x="5" y=${y + 21 + i * 18}>${d}</text>`) : nothing}`;
      })}</svg>`;
  }

  private chart() {
    const left = Array.from({ length: 14 }, (_, i) => i * 10);
    const rightT = Array.from({ length: 10 }, (_, i) => i * 2);
    return html`<svg class="chart" viewBox="0 0 1350 590" role="img" aria-label="Courtship sightings and pregnant individuals by year">
      ${sightings.map((v, i) => svg`<rect class="bar" x=${cx(i) - 35} y=${yL(v)} width="70" height=${Y0 - yL(v)}/>`)}
      <path class="trend" d=${"M" + pregnant.map((v, i) => `${cx(i)} ${yR(v)}`).join("L")} />
      <path class="axis" d="M${X0} ${Y1}V${Y0}H${X1}V${Y1}" />
      ${left.map((v) => svg`<path class="axis" d="M${X0 - 6} ${yL(v)}H${X0}"/><text class="end" x=${X0 - 16} y=${yL(v) + 6}>${v}</text>`)}
      ${rightT.map((v) => svg`<path class="axis" d="M${X1} ${yR(v)}H${X1 + 5}"/><text x=${X1 + 15} y=${yR(v) + 6}>${v}</text>`)}
      ${years.map((y, i) => svg`<path class="axis" d="M${X0 + step * i} ${Y0}V${Y0 + 5}"/><text class="m" x=${cx(i)} y=${Y0 + 28}>${y}</text>`)}
      <path class="axis" d="M${X1} ${Y0}V${Y0 + 5}" />
      ${[...barLabels, ...lineLabels].map(([t, x, y]) => svg`<text class="m b val" x=${x} y=${y + 6}>${t}</text>`)}
      <path stroke="#333" fill="none" d="M850 497H860L869 513M964 461L967 484" />
      <rect class="bar" x="828" y="27" width="35" height="11" /><text class="big" x="867" y="39">Courtship Sightings</text>
      <path class="trend" d="M826 72H863" /><text class="big" x="867" y="79">Pregnant Individuals</text>
      <text class="m b big" x="678" y="569">Year</text>
      <text class="m b big" transform="translate(173 288) rotate(-90)">Number of sightings</text>
      <text class="m b big" transform="translate(1190 278) rotate(-90)">Number of individuals</text>
    </svg>`;
  }

  private docArea() {
    return html`<main class="doc">
      <div class="tabs" role="tablist">
        <button class="tab" role="tab" aria-selected="false">${close()}*MT_MMRP_Project Report_Laamu Atoll_2022.indd @ 44% [GPU Preview] [Converted]</button>
        <button class="tab cur" role="tab" aria-selected="true">${close()}*MT_MMCP_Annual Report_Laamu Atoll_2022.indd @ 82% [GPU Preview]</button>
      </div>
      <div class="hr">
        <svg class="corner" width="32" height="30" aria-hidden="true"><path stroke="#c4c4c4" stroke-width="1" stroke-dasharray="2 2" fill="none" d="M9 0V30M0 9H30"/></svg>
        ${this.hRuler()}
      </div>
      <div class="canvas">
        ${this.vRuler()}
        <article class="page"><div class="frame">
          <div class="cols">
            <div>${leftCol.map((l) => html`<div class="ln">${l}</div>`)}</div>
            <div>${rightCol.map((l) => html`<div class="ln">${l}</div>`)}</div>
          </div>
          <svg class="edges" aria-hidden="true" fill="none">
            <path stroke-dasharray="4 3 2 4" d="M8 70.5H1356" />
            <path stroke-dasharray="3 5" d="M0 148.5H48" />
            <path stroke-dasharray="5 4 2 6" d="M50 168.5H1338" />
          </svg>
          ${this.chart()}
          <p class="caption"><b>Figure 27:</b> Number of sightings annually during which courtship was the primary behaviour, and the number of<br />individual reef manta rays (<i>Mobula alfredi</i>) which were recorded pregnant annually.</p>
        </div></article>
        <div class="bleed"></div>
      </div>
    </main>`;
  }

  private panel() {
    const topM = ic(32, 32, svg`<rect class="f" width="32" height="10"/><rect class="s" x="1" y="15" width="30" height="16"/>`);
    const botM = ic(32, 32, svg`<rect class="f" y="22" width="32" height="10"/><rect class="s" x="1" y="1" width="30" height="16"/>`);
    const leftM = ic(32, 32, svg`<rect class="f" width="10" height="32"/><rect class="s" x="15" y="1" width="16" height="30"/>`);
    const rightM = ic(32, 32, svg`<rect class="f" x="22" width="10" height="32"/><rect class="s" x="1" y="1" width="16" height="30"/>`);
    const bindL = ic(26, 32, svg`<path class="s" d="M8 1H25V28H20"/><path class="f" d="M0 0L20 4V32L0 28Z"/><text class="bind" x="10" y="24">A</text>`);
    const bindR = ic(26, 32, svg`<path class="s" d="M18 1H1V28H6"/><path class="f" d="M26 0L6 4V32L26 28Z"/><text class="bind" x="16" y="24">A</text>`);
    const portrait = ic(28, 32, svg`<rect class="s" x="1" y="1" width="26" height="30"/><circle class="f" cx="14" cy="8" r="4"/><path class="f" d="M6 18Q6 14 10 14H18Q22 14 22 18V27H20V30H8V27H6Z"/>`);
    const landscape = ic(26, 32, svg`<path class="s" d="M26 1H1V31H26"/><circle class="f" cx="8" cy="16" r="4"/><path class="f" d="M26 8V24H18Q14 23 14 20V12Q14 9 18 8Z"/>`);
    const addPage = ic(24, 24, svg`<rect class="s" x="2" y="2" width="20" height="20"/><path class="s" d="M12 7V17M7 12H17"/>`);
    const trash = ic(24, 26, svg`<path class="s" d="M1 6H23M3 6V22Q3 24 5 24H19Q21 24 21 22V6M8 5Q8 2 12 2Q16 2 16 5M8 9V20M12 9V20M16 9V20"/>`);
    const rulerIc = ic(32, 32, svg`<path class="f" d="M0 0H32V8H8V32H0Z"/><path fill="#303030" d="M11 3H13V6H11ZM17 3H19V6H17ZM23 3H25V6H23ZM28 3H30V6H28ZM3 11H6V13H3ZM3 17H6V19H3ZM3 23H6V25H3ZM3 28H6V30H3Z"/>`);
    const baseGrid = ic(32, 32, svg`<rect class="s" x="1" y="1" width="30" height="30"/><path class="s" d="M1 7H31M1 13H31M1 19H31M1 25H31M7 7V25M25 7V25"/>`);
    const docGrid = ic(32, 32, svg`<rect class="s" x="1" y="1" width="30" height="30"/><path class="s" d="M11 1V31M21 1V31M1 11H31M1 21H31"/>`);
    const guides = ic(32, 32, svg`<path class="s" d="M7 0V32M13 0V32M0 11H32M0 25H32"/>`);
    const lockG = ic(32, 34, svg`<path class="s" d="M7 0V32M13 0V32M0 11H32M0 25H16M22 24V20Q22 16 27 16Q31 16 31 20"/><rect class="f" x="20" y="24" width="14" height="10"/>`);
    const smart = ic(32, 34, svg`<path class="s" d="M7 0V32M0 11H32M17 5L9 11L17 17"/><path class="f" d="M24 16H31L29 21H33L24 34L26 25H22Z"/>`);
    return html`<aside class="panel" aria-label="Properties">
      <div class="ptabs" role="tablist">
        <button class="ptab cur" role="tab" aria-selected="true">Properties</button>
        ${["Links", "Layers", "Pages"].map((t) => html`<button class="ptab" role="tab" aria-selected="false">${t}</button>`)}
        <button class="ptab wide" role="tab" aria-selected="false">CC Libraries</button>
        <button class="ptab more" aria-label="More tabs">${dblRight()}</button>
      </div>
      <section class="sec nosel"><h2>No Selection</h2></section>
      <section class="sec document">
        <h2>Document</h2>
        <div class="pair mt20">
          <div class="sel"><select aria-label="Page size"><option>A4</option></select><span class="arrow">${down()}</span></div>
          <div class="ibtns">${this.iconBtn("Left to right binding", bindL, true)}${this.iconBtn("Right to left binding", bindR)}${this.iconBtn("Portrait", portrait, true)}${this.iconBtn("Landscape", landscape)}</div>
        </div>
        <div class="pair mt22">
          <div class="lf"><label for="pw">W:</label>${this.field("Width", "595.276 px", { id: "pw" })}</div>
          <div class="grow">${pagesIc()}<div class="field pgs"><input aria-label="Number of pages" .value=${"34"} /></div></div>
        </div>
        <div class="pair mt10">
          <div class="lf"><label for="ph">H:</label>${this.field("Height", "841.89 px", { id: "ph" })}</div>
          <label class="facing"><input class="chk" type="checkbox" />Facing Pages</label>
        </div>
        <h2 class="mt20">Margins</h2>
        <div class="margins mt20">
          <div class="stack"><div class="lf">${topM}${this.field("Top margin", "36 px")}</div><div class="lf">${botM}${this.field("Bottom margin", "36 px")}</div></div>
          <span class="c">${unlink()}</span>
          <div class="stack"><div class="lf">${leftM}${this.field("Left margin", "36 px")}</div><div class="lf">${rightM}${this.field("Right margin", "36 px")}</div></div>
        </div>
        <button class="wide-btn mt30">Adjust Layout</button>
      </section>
      <section class="sec pg">
        <h2>Page</h2>
        <div class="pair mt18">
          <div class="sel"><select aria-label="Page"><option>27</option></select><span class="arrow split">${down()}</span></div>
          <div class="pageic">${this.iconBtn("New page", addPage)}${this.iconBtn("Delete page", trash)}</div>
        </div>
        <button class="wide-btn mt16">Edit Page</button>
      </section>
      <section class="sec grid"><div class="spread"><h2>Rulers &amp; Grids</h2><div class="three">${this.iconBtn("Rulers", rulerIc, true)}${this.iconBtn("Baseline grid", baseGrid)}${this.iconBtn("Document grid", docGrid)}</div></div></section>
      <section class="sec grid"><div class="spread"><h2>Guides</h2><div class="three">${this.iconBtn("Show guides", guides, true)}${this.iconBtn("Lock guides", lockG, true)}${this.iconBtn("Smart guides", smart, true)}</div></div></section>
      <section class="sec quick"><h2>Quick Actions</h2><button class="wide-btn mt20">Import File</button></section>
    </aside>`;
  }

  render() {
    return html`<div class="app">
      ${this.titleBar()}${this.controlBar()}
      <div class="work">
        ${this.toolbox()}${this.docArea()}
        <div class="side">
          <div class="strip">${dblLeftSmall()}${dblLeftSmall()}</div>
          <nav class="dock" aria-label="Panels">
            ${dockGroups.map((g, gi) => html`<div class="dg"><span class="hgrip"></span>${g.map(([name, icon], i) =>
              html`<button class=${classMap({ item: true, cur: gi === 0 && i === 0 })}>${icon}${name}</button>`)}</div>`)}
          </nav>
        </div>
        ${this.panel()}
      </div>
    </div>`;
  }
}
